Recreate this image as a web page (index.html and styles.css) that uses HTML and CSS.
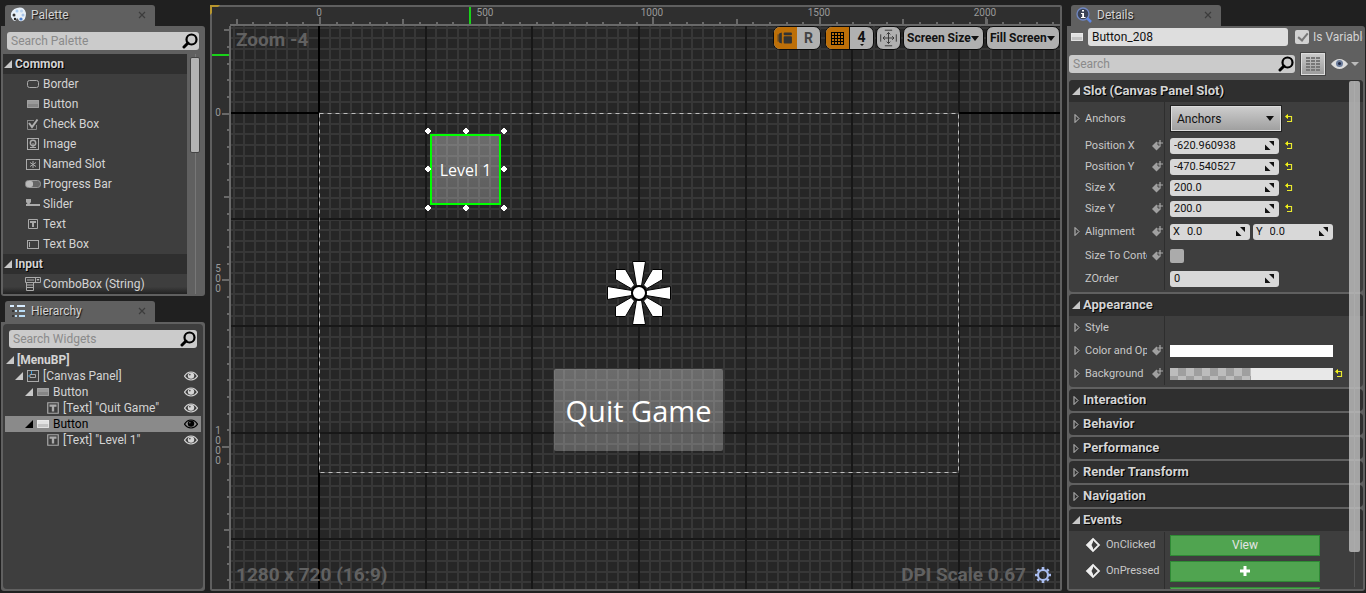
FILE: index.html
```html
<!DOCTYPE html>
<html lang="en">
<head>
<meta charset="utf-8">
<title>MenuBP - Widget Designer</title>
<link rel="stylesheet" href="styles.css">
</head>
<body>
<svg class="defs" aria-hidden="true">
  <symbol id="search" viewBox="0 0 16 16"><circle cx="9.500" cy="6.500" r="5" fill="none" stroke="#000" stroke-width="2.200"/><path d="M6 10L2 14" stroke="#000" stroke-width="3" stroke-linecap="round"/></symbol>
  <symbol id="open" viewBox="0 0 8 8"><path d="M8 0V8H0Z" fill="currentColor"/></symbol>
  <symbol id="closed" viewBox="0 0 6 9"><path d="M1 .5L5 4.500L1 8.500Z" fill="none" stroke="#c4c4c4"/></symbol>
  <symbol id="eye" viewBox="0 0 14 10"><path d="M0.5 5.2Q3 1 7 1Q11 1 13.5 5.2Q11 9 7 9Q3 9 .5 5.2Z" fill="none" stroke="currentColor" stroke-width="1.2"/><circle cx="7" cy="4.6" r="3.2" fill="currentColor"/><circle cx="5.8" cy="3.6" r=".9" fill="#555"/></symbol>
  <symbol id="btn" viewBox="0 0 14 10"><path d="M1 1H13V9H1Z" fill="#858585"/><path d="M1.500 1.500H12.500V5H1.500Z" fill="#999"/><path d="M1.500 1.500H12.500V8.500H1.500Z" fill="none" stroke="#aaa" stroke-width=".7"/></symbol>
  <symbol id="btnlit" viewBox="0 0 14 10"><path d="M1 1H13V9H1Z" fill="#c4c4c4"/><path d="M1 1H13V5H1Z" fill="#e2e2e2"/><path d="M1.500 1.500H12.500V8.500H1.500Z" fill="none" stroke="#eee" stroke-width=".7"/></symbol>
  <symbol id="txt" viewBox="0 0 12 12"><path d="M1.500 1.500H10.500V10.500H1.500Z" fill="none" stroke="#aaa"/><path d="M3 3H9V5H7V9H5V5H3Z" fill="#aaa"/></symbol>
  <symbol id="bind" viewBox="0 0 11 11"><path d="M0 6L4.500 1.500L9 6L4.500 10.500Z" fill="#a0a0a0"/><path d="M8 0V6M5 3H11" stroke="#3e3e3e" stroke-width="3"/><path d="M8 0V6M5 3H11" stroke="#aaa" stroke-width="1.200"/></symbol>
  <symbol id="spin" viewBox="0 0 9 9"><path d="M4 0H9V5ZM0 3.500V9H5.500Z" fill="#111"/></symbol>
  <symbol id="reset" viewBox="0 0 9 9"><path d="M4 0V5L1 2.500Z" fill="#ff0"/><path d="M2 2.500H7.500V7.500H3" fill="none" stroke="#e9e930" stroke-width="1.200"/></symbol>
  <symbol id="event" viewBox="0 0 16 16"><path d="M8 2L14 8L8 14L2 8Z" fill="#3e3e3e" stroke="#eee" stroke-width="1.800"/><path d="M8 2V5L6.500 8L8 11V14L2 8Z" fill="#eee"/></symbol>
  <symbol id="x" viewBox="0 0 8 8"><path d="M1 1L7 7M7 1L1 7" stroke="#3c3c3c" stroke-width="1.200"/></symbol>
</svg>

<main class="editor">
  <div class="side">
    <section class="dock">
      <div class="tab">
        <svg class="i16" viewBox="0 0 16 16"><path d="M1 10Q0 3 7 1Q14-1 16 6Q16 13 12 14Q9 15 8 12Q7 10 6 13Q5 15 3 13Z" fill="#e8f0f8"/><circle cx="4" cy="8" r="1.500" fill="#333"/><circle cx="7" cy="4" r="1.500" fill="#a9cbee"/><circle cx="11.500" cy="4" r="1.500" fill="#b8d2f0"/><circle cx="13" cy="8" r="1.500" fill="#a4c2e8"/><circle cx="11" cy="12" r="1.600" fill="#4a7fd0"/><circle cx="5" cy="12" r="1.200" fill="#222"/></svg>
        <span>Palette</span><button class="close" aria-label="Close Palette"><svg><use href="#x"/></svg></button>
      </div>
      <div class="panel palette">
        <label class="search"><input type="text" placeholder="Search Palette" aria-label="Search Palette"><svg class="i16"><use href="#search"/></svg></label>
        <div class="scroller">
          <ul class="list">
            <li class="cat"><svg class="i8"><use href="#open"/></svg>Common</li>
            <li><svg class="i16" viewBox="0 0 16 16"><rect x="2.500" y="4.500" width="11" height="7" rx="2" fill="none" stroke="#aaa"/></svg>Border</li>
            <li><svg class="i16" viewBox="-1 -3 16 16"><use href="#btn" width="14" height="10"/></svg>Button</li>
            <li><svg class="i16" viewBox="0 0 16 16"><path d="M2.500 4V13.500H11.500V9" fill="none" stroke="#888"/><path d="M2.500 4.500H9" stroke="#888"/><path d="M4 7L7 11L12.500 3.500" fill="none" stroke="#b0b0b0" stroke-width="2"/></svg>Check Box</li>
            <li><svg class="i16" viewBox="0 0 16 16"><rect x="2.500" y="2.500" width="11" height="11" fill="none" stroke="#aaa"/><circle cx="8" cy="7" r="2.700" fill="none" stroke="#aaa" stroke-width="1.500"/><path d="M8 7V12M5 11.500H11" stroke="#aaa"/></svg>Image</li>
            <li><svg class="i16" viewBox="0 0 16 16"><rect x="1.500" y="3.500" width="13" height="10" fill="none" stroke="#aaa"/><path d="M8 5V12M5 6.500L11 10.500M11 6.500L5 10.500" stroke="#aaa"/></svg>Named Slot</li>
            <li><svg class="i16" viewBox="0 0 16 16"><rect x=".5" y="4.500" width="15" height="7" rx="3" fill="#666" stroke="#999"/><rect x="1" y="5" width="7" height="6" rx="2" fill="#bbb"/></svg>Progress Bar</li>
            <li><svg class="i16" viewBox="0 0 16 16"><path d="M1 3H6V6L4.500 8H15V10H1V8H2.500L1 6Z" fill="#aaa"/></svg>Slider</li>
            <li><svg class="i16" viewBox="-2 -2 16 16"><use href="#txt" width="12" height="12"/></svg>Text</li>
            <li><svg class="i16" viewBox="0 0 16 16"><rect x="2.500" y="4.500" width="11" height="8" fill="none" stroke="#aaa"/><path d="M4.500 6V11" stroke="#aaa"/></svg>Text Box</li>
            <li class="cat"><svg class="i8"><use href="#open"/></svg>Input</li>
            <li><svg class="i16" viewBox="0 0 16 16"><path d="M.5 1.500H15.500V6.500H.5ZM10.500 1.500V6.500M2 4H9M1.500 6.500V14.500H8.500V6.500M1.500 9H8M1.500 11.500H8" fill="none" stroke="#aaa"/><path d="M11.500 3H14.500L13 5Z" fill="#bbb"/></svg>ComboBox (String)</li>
          </ul>
          <div class="track"><div class="thumb"></div></div>
        </div>
      </div>
    </section>

    <section class="dock grow">
      <div class="tab">
        <svg class="i16" viewBox="0 0 16 16"><path d="M0 3H3M2 8H4M2 13H4" stroke="#333" stroke-width="2"/><path d="M0 3H4M7 3H15" stroke="#d8ecff" stroke-width="2"/><path d="M5 8H7M9 8H15M5 13H7M9 13H15" stroke="#b9dcf5" stroke-width="2"/></svg>
        <span>Hierarchy</span><button class="close" aria-label="Close Hierarchy"><svg><use href="#x"/></svg></button>
      </div>
      <div class="panel tree-panel"><div class="tree-box">
        <label class="search"><input type="text" placeholder="Search Widgets" aria-label="Search Widgets"><svg class="i16"><use href="#search"/></svg></label>
        <ul class="tree">
          <li class="root"><svg class="i8"><use href="#open"/></svg><span>[MenuBP]</span></li>
          <li class="d1"><svg class="i8"><use href="#open"/></svg><svg class="ti" viewBox="0 0 14 14"><rect x="1.500" y="1.500" width="11" height="11" fill="none" stroke="#aaa"/><path d="M4 5.500H9.500V8.500H4Z" fill="none" stroke="#aaa"/><path d="M5.500 2V5M2 7H4" stroke="#3a9bdc"/></svg><span>[Canvas Panel]</span><button class="vis" aria-label="Visibility"><svg><use href="#eye"/></svg></button></li>
          <li class="d2"><svg class="i8"><use href="#open"/></svg><svg class="ti"><use href="#btn"/></svg><span>Button</span><button class="vis" aria-label="Visibility"><svg><use href="#eye"/></svg></button></li>
          <li class="d3"><svg class="ti"><use href="#txt"/></svg><span>[Text] "Quit Game"</span><button class="vis" aria-label="Visibility"><svg><use href="#eye"/></svg></button></li>
          <li class="d2 selected"><svg class="i8"><use href="#open"/></svg><svg class="ti"><use href="#btnlit"/></svg><span>Button</span><button class="vis" aria-label="Visibility"><svg><use href="#eye"/></svg></button></li>
          <li class="d3"><svg class="ti"><use href="#txt"/></svg><span>[Text] "Level 1"</span><button class="vis" aria-label="Visibility"><svg><use href="#eye"/></svg></button></li>
        </ul>
      </div></div>
    </section>
  </div>

  <section class="designer">
    <svg class="ruler-top">
      <defs>
        <pattern id="tx" x="107" width="250" height="20" patternUnits="userSpaceOnUse"><path d="M1 15V20M18 15V20M34 15V20M51 15V20M68 15V20M84 12V20M101 15V20M118 15V20M134 15V20M151 15V20M168 12V20M184 15V20M201 15V20M218 15V20M234 15V20" stroke="#696969" stroke-width="2"/></pattern>
      </defs>
      <rect x="18" width="100%" height="17" fill="url(#tx)"/>
      <path d="M108 10V17M275 10V17M441 10V17M608 10V17M774 10V17" stroke="#696969" stroke-width="2"/>
      <g class="ruler-text" text-anchor="middle"><text x="107" y="9">0</text><text x="273" y="9">500</text><text x="440" y="9">1000</text><text x="607" y="9">1500</text><text x="773" y="9">2000</text></g>
      <path d="M258 0V17" stroke="#19d219" stroke-width="2"/>
      <path d="M18 18H2000" stroke="#696969" stroke-width="2"/>
    </svg>
    <svg class="ruler-left">
      <defs>
        <pattern id="ty" y="87" width="20" height="250" patternUnits="userSpaceOnUse"><path d="M15 1H20M15 17H20M15 34H20M15 51H20M15 67H20M12 84H20M15 101H20M15 117H20M15 134H20M15 151H20M12 167H20M15 184H20M15 201H20M15 217H20M15 234H20" stroke="#696969" stroke-width="2"/></pattern>
      </defs>
      <rect width="17" height="100%" fill="url(#ty)"/>
      <path d="M10 88H17M10 254H17M10 421H17" stroke="#696969" stroke-width="2"/>
      <g class="ruler-text" text-anchor="middle"><text x="6" y="90">0</text>
      <text><tspan x="6" y="246">5</tspan><tspan x="6" y="256">0</tspan><tspan x="6" y="266">0</tspan></text>
      <text><tspan x="6" y="408">1</tspan><tspan x="6" y="418">0</tspan><tspan x="6" y="428">0</tspan><tspan x="6" y="438">0</tspan></text></g>
      <path d="M0 29H17" stroke="#19d219" stroke-width="2"/>
      <path d="M18 0V2000" stroke="#696969" stroke-width="2"/>
    </svg>
    <div class="viewport">
      <svg class="grid">
        <defs>
          <pattern id="minor" x="87" y="86" width="32" height="32" patternUnits="userSpaceOnUse"><path d="M1 0V32M12 0V32M22 0V32M0 1H32M0 12H32M0 22H32" stroke="#373737" stroke-width="2"/></pattern>
          <pattern id="major" x="87" y="86" width="320" height="320" patternUnits="userSpaceOnUse"><path d="M1 0V320M108 0V320M214 0V320M0 1H320M0 107H320M0 214H320" stroke="#171717" stroke-width="2"/></pattern>
        </defs>
        <rect width="100%" height="100%" fill="url(#minor)"/>
        <rect width="100%" height="100%" fill="url(#major)"/>
        <path d="M88 0V1200M0 87H88M728 87H2000" stroke="#000" stroke-width="2"/>
        <path d="M88 87H728" stroke="#292929" stroke-width="2"/>
        <rect x="88.500" y="87.500" width="639" height="359" fill="none" stroke="#484848"/>
        <rect x="88.500" y="87.500" width="639" height="359" fill="none" stroke="#bdbdbd" stroke-dasharray="4 4"/>
      </svg>
      <button class="widget quit">Quit Game</button>
      <button class="widget level">Level 1</button>
      <svg class="handles" viewBox="0 0 86 86"><g fill="#fff" stroke="#fff" stroke-linejoin="round"><path d="M5 2L8 5L5 8L2 5ZM43 2L46 5L43 8L40 5ZM81 2L84 5L81 8L78 5ZM5 40L8 43L5 46L2 43ZM81 40L84 43L81 46L78 43ZM5 79L8 82L5 85L2 82ZM43 79L46 82L43 85L40 82ZM81 79L84 82L81 85L78 82Z"/></g></svg>
      <svg class="anchor" viewBox="-32 -32 64 64"><g fill="#fff" stroke="#000"><g id="petal"><path d="M-6.500-31.500H6.500L2.500-7H-2.500Z"/><path d="M-23.500-23.500H-13.500L-4.500-8L-8-4.500L-23.500-13.500Z"/></g><use href="#petal" transform="rotate(90)"/><use href="#petal" transform="rotate(180)"/><use href="#petal" transform="rotate(270)"/><circle r="7" stroke-width="2"/></g></svg>
      <div class="hud zoom">Zoom -4</div>
      <div class="hud res">1280 x 720 (16:9)</div>
      <div class="hud dpi">DPI Scale 0.67 <svg class="i16" viewBox="-8 -8 16 16"><circle r="5" fill="none" stroke="#a9bdf0" stroke-width="2.200"/><path d="M0-8V-5M0 8V5M-8 0H-5M8 0H5M-5.600-5.600L-4-4M5.600 5.600L4 4M-5.600 5.600L-4 4M5.600-5.600L4-4" stroke="#a9bdf0" stroke-width="2.600"/></svg></div>
      <div class="toolbar">
        <div class="group"><button class="on" aria-label="Outline"><svg viewBox="0 0 24 24"><path d="M5 7L8 6V18L5 17Z" fill="#333"/><rect x="10" y="6" width="9" height="3" rx="1" fill="#333"/><rect x="10" y="10" width="9" height="8" rx="1" fill="#333"/><path d="M4 8V16" stroke="#333"/></svg></button><button class="dim">R</button></div>
        <div class="group"><button class="on" aria-label="Snap to grid"><svg viewBox="0 0 23 22"><path d="M5.500 5V17M8.500 5V17M11.500 5V17M14.500 5V17M17.500 5V17M5 5.500H18M5 8.500H18M5 11.500H18M5 14.500H18M5 17.500H18" stroke="#000"/></svg></button><button class="split snap">4<i></i></button></div>
        <div class="group"><button aria-label="Zoom to fit"><svg viewBox="0 0 24 24"><path d="M12 6V18M6 12H18M8 3.500H16M8 20.500H16M3.500 8V16M20.500 8V16" stroke="#333" fill="none"/><path d="M10 8L12 6L14 8M10 16L12 18L14 16M8 10L6 12L8 14M16 10L18 12L16 14" stroke="#333" fill="none"/></svg></button></div>
        <div class="group drop"><select aria-label="Screen Size"><option>Screen Size</option></select></div>
        <div class="group drop"><select aria-label="Fill Screen"><option>Fill Screen</option></select></div>
      </div>
    </div>
    <svg class="corner" viewBox="0 0 10 10"><path d="M0 0H10L8 2H2V8L0 10Z" fill="#b8962e"/></svg>
  </section>

  <section class="dock details">
    <div class="tab">
      <svg class="i16" viewBox="0 0 16 16"><circle cx="7" cy="7" r="6" fill="#3a4256" stroke="#7088c4" stroke-width="1.300"/><path d="M11 11L15 15" stroke="#5f86e0" stroke-width="2.500"/><path d="M6 3H8V4.500H6ZM5 6H8V10H9.500V11H5V10H6.200V7H5Z" fill="#fff"/></svg>
      <span>Details</span><button class="close" aria-label="Close Details"><svg><use href="#x"/></svg></button>
    </div>
    <div class="panel details-panel">
      <div class="name-row"><svg class="ti"><use href="#btnlit"/></svg><input class="name" type="text" value="Button_208" aria-label="Name"><label class="isvar"><input type="checkbox" class="check" checked>Is Variable</label></div>
      <div class="find-row"><label class="search"><input type="text" placeholder="Search" aria-label="Search"><svg class="i16"><use href="#search"/></svg></label>
        <button class="matrix" aria-label="Property matrix"><svg viewBox="0 0 14 14"><path d="M0 1H4M5 1H9M10 1H14M0 4H4M5 4H9M10 4H14M0 7H4M5 7H9M10 7H14M0 10H4M5 10H9M10 10H14M0 13H4M5 13H9M10 13H14" stroke="#777" stroke-width="2"/></svg></button>
        <button class="view" aria-label="View options"><svg viewBox="0 0 28 12"><path d="M0 6Q4 1 8.500 1Q13 1 17 6Q13 11 8.500 11Q4 11 0 6Z" fill="#ddd"/><circle cx="8.500" cy="5.500" r="3.500" fill="#6c7d9c"/><circle cx="8.500" cy="5.500" r="1.500" fill="#222b45"/><path d="M20 4H28L24 8Z" fill="#bbb"/></svg></button></div>
      <div class="props">
        <section class="cat-box">
          <h2><svg class="i8"><use href="#open"/></svg>Slot (Canvas Panel Slot)</h2>
          <div class="body">
            <div class="row tall"><div class="key"><svg class="ex"><use href="#closed"/></svg><span>Anchors</span></div><div class="val"><div class="drop anchors"><select aria-label="Anchors"><option>Anchors</option></select></div><svg class="rs"><use href="#reset"/></svg></div></div>
            <div class="row"><div class="key"><label for="px">Position X</label><svg class="bd"><use href="#bind"/></svg></div><div class="val"><div class="field"><input id="px" value="-620.960938"><svg><use href="#spin"/></svg></div><svg class="rs"><use href="#reset"/></svg></div></div>
            <div class="row"><div class="key"><label for="py">Position Y</label><svg class="bd"><use href="#bind"/></svg></div><div class="val"><div class="field"><input id="py" value="-470.540527"><svg><use href="#spin"/></svg></div><svg class="rs"><use href="#reset"/></svg></div></div>
            <div class="row"><div class="key"><label for="sx">Size X</label><svg class="bd"><use href="#bind"/></svg></div><div class="val"><div class="field"><input id="sx" value="200.0"><svg><use href="#spin"/></svg></div><svg class="rs"><use href="#reset"/></svg></div></div>
            <div class="row"><div class="key"><label for="sy">Size Y</label><svg class="bd"><use href="#bind"/></svg></div><div class="val"><div class="field"><input id="sy" value="200.0"><svg><use href="#spin"/></svg></div><svg class="rs"><use href="#reset"/></svg></div></div>
            <div class="row wide"><div class="key"><svg class="ex"><use href="#closed"/></svg><span>Alignment</span><svg class="bd"><use href="#bind"/></svg></div><div class="val pair"><div class="field half"><label for="ax">X</label><input id="ax" value="0.0"><svg><use href="#spin"/></svg></div><div class="field half"><label for="ay">Y</label><input id="ay" value="0.0"><svg><use href="#spin"/></svg></div></div></div>
            <div class="row mid"><div class="key"><label for="sc">Size To Content</label><svg class="bd"><use href="#bind"/></svg></div><div class="val"><input id="sc" type="checkbox" class="check"></div></div>
            <div class="row mid"><div class="key"><label for="zo">ZOrder</label></div><div class="val"><div class="field"><input id="zo" value="0"><svg><use href="#spin"/></svg></div></div></div>
          </div>
        </section>
        <section class="cat-box">
          <h2><svg class="i8"><use href="#open"/></svg>Appearance</h2>
          <div class="body">
            <div class="row mid"><div class="key"><svg class="ex"><use href="#closed"/></svg><span>Style</span></div><div class="val"></div></div>
            <div class="row mid"><div class="key"><svg class="ex"><use href="#closed"/></svg><span>Color and Opacity</span><svg class="bd"><use href="#bind"/></svg></div><div class="val"><button class="swatch" aria-label="Color and Opacity"></button></div></div>
            <div class="row mid"><div class="key"><svg class="ex"><use href="#closed"/></svg><span>Background</span><svg class="bd"><use href="#bind"/></svg></div><div class="val near"><button class="swatch alpha" aria-label="Background Color"></button><svg class="rs"><use href="#reset"/></svg></div></div>
          </div>
        </section>
        <section class="cat-box"><h2><svg class="ex"><use href="#closed"/></svg>Interaction</h2></section>
        <section class="cat-box"><h2><svg class="ex"><use href="#closed"/></svg>Behavior</h2></section>
        <section class="cat-box"><h2><svg class="ex"><use href="#closed"/></svg>Performance</h2></section>
        <section class="cat-box"><h2><svg class="ex"><use href="#closed"/></svg>Render Transform</h2></section>
        <section class="cat-box"><h2><svg class="ex"><use href="#closed"/></svg>Navigation</h2></section>
        <section class="cat-box">
          <h2><svg class="i8"><use href="#open"/></svg>Events</h2>
          <div class="body events">
            <div class="row event"><div class="key"><svg class="i16"><use href="#event"/></svg><span>OnClicked</span></div><div class="val"><button class="green">View</button></div></div>
            <div class="row event"><div class="key"><svg class="i16"><use href="#event"/></svg><span>OnPressed</span></div><div class="val"><button class="green" aria-label="Add OnPressed"><svg viewBox="0 0 12 12"><path d="M6 1V11M1 6H11" stroke="#fff" stroke-width="3"/></svg></button></div></div>
            <div class="row event"><div class="key"><svg class="i16"><use href="#event"/></svg></div><div class="val"><button class="green" aria-label="Add event"></button></div></div>
          </div>
        </section>
        <div class="bar"><div class="bar-thumb"></div></div>
      </div>
    </div>
  </section>
</main>
</body>
</html>
```
FILE: styles.css
```css
* { box-sizing: border-box; }
html, body { height: 100%; margin: 0; }
body { background: #202020; color: #d4d4d4; font: 12px/16px Roboto, "Liberation Sans", sans-serif; overflow: hidden; }
svg { display: block; flex: none; }
button, input, select { font: inherit; color: inherit; margin: 0; padding: 0; border: 0; background: none; }
ul { list-style: none; margin: 0; padding: 0; }
.defs { position: absolute; width: 0; height: 0; }
.i16 { width: 16px; height: 16px; }
.i8 { width: 8px; height: 8px; color: #c8c8c8; }
.ti { width: 14px; height: 14px; }

.editor { display: grid; grid-template-columns: 204px minmax(0, 1fr) 298px; gap: 5px; height: 100vh; padding: 5px 1px 2px 1px; }
.side { display: flex; flex-direction: column; gap: 5px; min-height: 0; }
.dock { display: flex; flex-direction: column; min-height: 0; }
.grow { flex: 1; }
.tab { display: flex; align-items: center; gap: 5px; width: 150px; height: 21px; margin-left: 4px; padding: 0 9px 1px 5px; background: #606060; border-radius: 3px 3px 0 0; text-shadow: 1px 1px 1px #111; }
.tab span { flex: 1; }
.close svg { width: 8px; height: 8px; }
.panel { background: #606060; border-radius: 0 3px 3px 3px; padding: 2px; min-height: 0; }
.search { display: flex; align-items: center; height: 18px; padding: 0 1px 0 4px; background: #cbcbcb; border-radius: 3px; }
.search input { flex: 1; min-width: 0; color: #222; outline: 0; }
.search input::placeholder { color: #8a8a8a; opacity: 1; }

.palette .search { margin: 4px 4px 4px 4px; }
.scroller { display: flex; }
.list { flex: 1; background: linear-gradient(#3e3e3e 97%, #222); }
.list li { display: flex; align-items: center; gap: 2px; height: 20px; padding-left: 22px; }
.list .cat { padding-left: 1px; gap: 3px; background: #2f2f2f; font-weight: 700; text-shadow: 1px 1px 0 #000; }
.track { width: 16px; padding: 3px 3px 0; background: linear-gradient(90deg, transparent 8px, #777 8px, #777 9px, transparent 9px); }
.thumb { height: 96px; background: #b4b4b4; border: 1px solid #444; border-radius: 2px; }

.tree-panel { flex: 1; }
.tree-box { height: 100%; padding: 6px 2px; background: #3e3e3e; border-radius: 4px; }
.tree-box .search { margin: 0 4px 4px; }
.tree li { display: flex; align-items: center; gap: 3px; height: 16px; padding-right: 3px; }
.tree span { flex: 1; }
.root { padding-left: 1px; font-weight: 700; }
.d1 { padding-left: 10px; }
.d2 { padding-left: 20px; }
.d3 { padding-left: 41px; }
.tree .selected, .selected .i8 { background: #8a8a8a; color: #000; }
.vis svg { width: 14px; height: 10px; }
.tree button { padding-bottom: 1px; }
.d2 .ti { height: 10px; }

.designer { position: relative; display: grid; grid-template: 19px minmax(0, 1fr) / 19px minmax(0, 1fr); border: 2px solid #5f5f5f; border-radius: 2px; background: #2f2f2f; min-height: 0; }
.ruler-top { grid-column: 1 / 3; width: 100%; height: 19px; }
.ruler-left { width: 19px; height: 100%; }
.ruler-text { font-size: 10px; fill: #999; }
.viewport { position: relative; overflow: hidden; background: #262626; }
.grid { width: 100%; height: 100%; }
.corner { position: absolute; left: -2px; top: -2px; width: 10px; height: 10px; }
.widget { position: absolute; color: #fff; font-family: "Open Sans", "Noto Sans", sans-serif; background: linear-gradient(rgba(255,255,255,.32), rgba(255,255,255,.25)); }
.quit { left: 323px; top: 343px; width: 169px; height: 82px; padding-top: 2px; font-size: 29px; border-radius: 2px; }
.level { left: 199px; top: 108px; width: 71px; height: 71px; font-size: 16px; border: 2px solid #0f0; }
.handles { position: absolute; left: 192px; top: 100px; width: 86px; height: 86px; }
.anchor { position: absolute; left: 376px; top: 235px; width: 64px; height: 64px; }
.hud { position: absolute; color: #616161; font-size: 19px; line-height: 24px; font-weight: 700; }
.zoom { left: 5px; top: 2px; }
.res { left: 5px; bottom: 2px; }
.dpi { right: 9px; bottom: 2px; display: flex; align-items: center; gap: 9px; }

.toolbar { position: absolute; right: 0; top: 0; display: flex; gap: 2px; color: #111; font-weight: 700; }
.group { display: flex; height: 24px; border: 1px solid #0a0a0a; border-radius: 7px; background: #b0b0b0; overflow: hidden; }
.group:first-child { margin-right: 2px; }
.group button { width: 23px; font-size: 14px; }
.group button svg { width: 23px; height: 22px; }
.group .on { background: #bd6f08; }
.group .dim { color: #444; }
.group .split { width: 24px; border-left: 1px solid #111; }
.snap { display: flex; flex-direction: column; align-items: center; justify-content: center; line-height: 14px; }
.snap i { border: 2px solid transparent; border-top-color: #111; border-bottom: 0; }
.drop { display: grid; align-items: center; }
.drop select, .drop::after { grid-area: 1 / 1; }
.drop select { appearance: none; height: 100%; padding: 0 12px 0 3px; outline: 0; }
.drop::after { content: ""; justify-self: end; margin-right: 4px; border: 4px solid transparent; border-top: 5px solid #111; border-bottom: 0; pointer-events: none; }

.details-panel { flex: 1; display: flex; flex-direction: column; overflow: hidden; }
.name-row { display: flex; align-items: center; gap: 4px; height: 18px; padding-left: 1px; }
.name-row .ti { height: 10px; }
.name { width: 200px; height: 18px; padding: 0 4px; background: #dedede; color: #111; border-radius: 3px; }
.isvar { display: flex; align-items: center; gap: 4px; margin-left: 3px; white-space: nowrap; flex: 1; min-width: 0; overflow: hidden; }
.check { appearance: none; flex: none; width: 14px; height: 14px; border-radius: 2px; background: #ababab; }
.check:checked { background: #d2d2d2; }
.check:checked::before { content: ""; display: block; width: 4px; height: 8px; margin: 1px 0 0 5px; border: solid #777; border-width: 0 2px 2px 0; transform: rotate(40deg); }
.find-row { display: flex; align-items: center; gap: 5px; height: 24px; margin: 6px 0 4px; }
.find-row .search { width: 226px; }
.matrix { display: grid; place-items: center; width: 26px; height: 24px; border: 1px solid #444; box-shadow: inset 0 0 0 1px #ddd; background: linear-gradient(#ccc, #9a9a9a); }
.matrix svg { width: 14px; height: 14px; }
.view svg { width: 28px; height: 12px; }
.props { position: relative; flex: 1; min-height: 0; overflow: hidden; display: flex; flex-direction: column; gap: 2px; }
.cat-box { flex: none; background: #3e3e3e; border-radius: 4px; overflow: hidden; }
h2 { display: flex; align-items: center; gap: 3px; height: 22px; margin: 0; padding-left: 3px; background: #2f2f2f; font-size: 13px; line-height: 16px; font-weight: 700; text-shadow: 1px 1px 0 #000; }
h2 .ex { margin: 0 1px; }
.ex { width: 6px; height: 9px; }
.body { padding-bottom: 2px; font-size: 11px; }
.events { padding-top: 1px; }
.row { display: grid; grid-template-columns: 95px minmax(0, 1fr); height: 21px; }
.row.tall { height: 33px; }
.row.wide { height: 25px; }
.row.mid { height: 23px; }
.row.event { height: 26px; }
.key { display: flex; align-items: center; padding: 0 1px 0 16px; color: #c8c8c8; white-space: nowrap; min-width: 0; }
.key .ex:first-child { margin: 0 5px 0 -11px; }
.key > span, .key > label { flex: 0 1 62px; min-width: 0; overflow: hidden; }
.bd { width: 11px; height: 11px; margin-left: 5px; }
.val { display: flex; align-items: center; gap: 5px; padding-left: 5px; border-left: 1px solid #2e2e2e; }
.pair { gap: 3px; }
.near { gap: 1px; }
.tall .val { gap: 2px; }
.field { display: flex; align-items: center; width: 109px; height: 16px; padding: 0 5px 0 4px; background: #d8d8d8; color: #111; border-radius: 3px; }
.field input { flex: 1; min-width: 0; width: 0; outline: 0; }
.field svg { width: 9px; height: 9px; }
.half { width: 80px; gap: 7px; padding-left: 3px; }
.rs { width: 9px; height: 9px; }
.anchors { width: 112px; height: 27px; background: linear-gradient(#cecece, #9e9e9e); border: 1px solid #222; box-shadow: inset 0 0 0 1px #ddd; color: #111; font-size: 12px; }
.anchors select { padding-left: 6px; }
.drop.anchors::after { margin-right: 7px; }
.swatch { width: 163px; height: 12px; background: #fff; }
.alpha { background: linear-gradient(90deg, transparent 50%, #e8e8e8 50%), conic-gradient(#9f9f9f 25%, #bcbcbc 0 50%, #9f9f9f 0 75%, #bcbcbc 0) 0 0 / 16px 16px; }
.event .key { gap: 5px; }
.green { display: grid; place-items: center; width: 150px; height: 21px; background: #50a450; border: 1px solid #2f8a35; color: #e4e4e4; font-size: 12px; }
.green svg { width: 12px; height: 12px; }
.bar { position: absolute; top: 1px; bottom: 2px; right: 3px; width: 11px; background: linear-gradient(90deg, transparent 5px, #555 5px, #555 6px, transparent 6px); }
.bar-thumb { height: 93%; background: rgba(190,190,190,.82); border-radius: 2px; }
```
